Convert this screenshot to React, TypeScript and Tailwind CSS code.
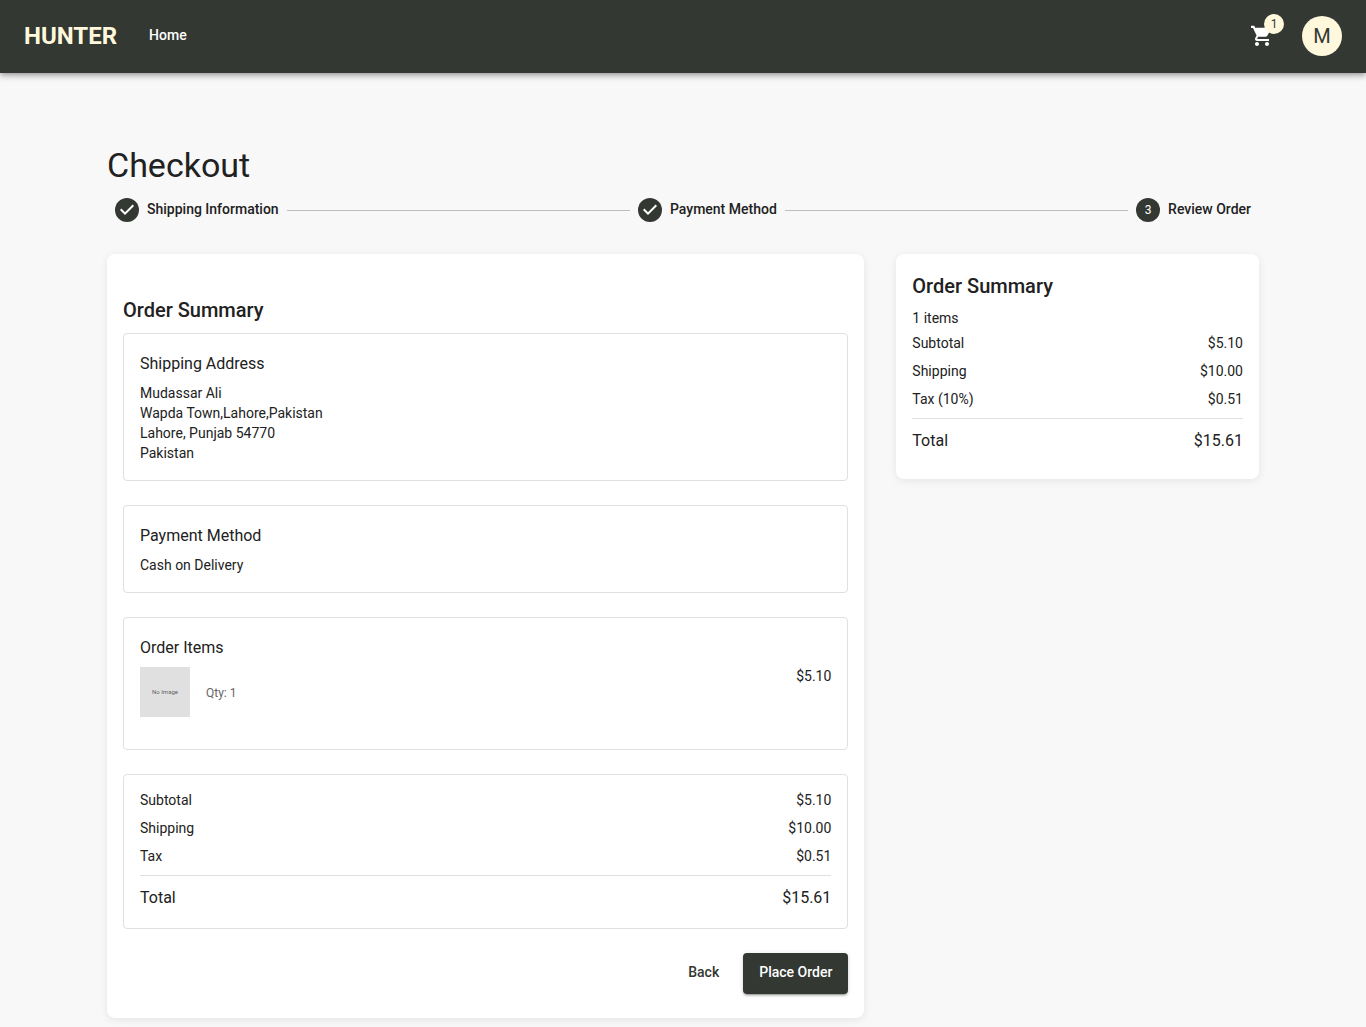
const CART_PATH =
  "M7 18c-1.1 0-1.99.9-1.99 2S5.9 22 7 22s2-.9 2-2-.9-2-2-2zM1 2v2h2l3.6 7.59-1.35 2.45c-.16.28-.25.61-.25.96 0 1.1.9 2 2 2h12v-2H7.42c-.14 0-.25-.11-.25-.25l.03-.12.9-1.83h7.45c.75 0 1.41-.41 1.75-1.03l3.58-6.49c.08-.14.12-.31.12-.48 0-.55-.45-1-1-1H5.21l-.94-2H1zm16 16c-1.1 0-1.99.9-1.99 2s.89 2 1.99 2 2-.9 2-2-.9-2-2-2z";
const CHECK_PATH = "M10 17l-5-5 1.41-1.41L10 14.17l7.59-7.59L19 8l-9 9z";

function Navbar() {
  return (
    <header className="flex h-[73px] items-center justify-between bg-[#333832] px-6 pb-0.5 shadow-[0_2px_4px_-1px_rgba(0,0,0,0.2),0_4px_5px_0_rgba(0,0,0,0.14),0_1px_10px_0_rgba(0,0,0,0.12)]">
      <div className="flex items-center">
        <span className="text-2xl font-bold leading-8 text-[#fff8dc]">HUNTER</span>
        <a className="mb-0.5 ml-8 text-sm font-medium text-white">Home</a>
      </div>
      <div className="flex items-center">
        <div className="relative mr-[28px] size-6">
          <svg viewBox="0 0 24 24" className="size-6 fill-white" aria-hidden="true">
            <path d={CART_PATH} />
          </svg>
          <span className="absolute left-[14px] top-[-10px] flex size-5 items-center justify-center rounded-full bg-[#fff8dc] text-xs text-[#333832]">
            1
          </span>
        </div>
        <div className="flex size-10 items-center justify-center rounded-full bg-[#fff8dc] text-xl text-[#333832]">
          M
        </div>
      </div>
    </header>
  );
}

function StepCircle({ number }: { number?: number }) {
  if (number) {
    return (
      <span className="flex size-6 shrink-0 items-center justify-center rounded-full bg-[#333832] text-xs text-white">
        {number}
      </span>
    );
  }
  return (
    <svg viewBox="0 0 24 24" className="size-6 shrink-0" aria-hidden="true">
      <circle cx="12" cy="12" r="12" fill="#333832" />
      <path d={CHECK_PATH} fill="#ffffff" />
    </svg>
  );
}

function Step({ label, number }: { label: string; number?: number }) {
  return (
    <div className="flex items-center px-2">
      <StepCircle number={number} />
      <span className="-mt-0.5 ml-2 text-sm font-medium leading-5 text-[#212121]">{label}</span>
    </div>
  );
}

function Stepper() {
  return (
    <div className="mb-[31.8px] flex items-center">
      <Step label="Shipping Information" />
      <div className="h-px flex-1 bg-[#bdbdbd]" />
      <Step label="Payment Method" />
      <div className="h-px flex-1 bg-[#bdbdbd]" />
      <Step label="Review Order" number={3} />
    </div>
  );
}

function Row({ label, value }: { label: string; value: string }) {
  return (
    <div className="mb-2 flex justify-between text-sm leading-[20.02px] text-[#212121]">
      <span>{label}</span>
      <span>{value}</span>
    </div>
  );
}

function TotalRow() {
  return (
    <div className="flex justify-between text-base leading-7 text-[#212121]">
      <span>Total</span>
      <span>$15.61</span>
    </div>
  );
}

function Box({ title, children }: { title?: string; children: React.ReactNode }) {
  return (
    <section className="mb-6 rounded border border-[#e0e0e0] p-4">
      {title ? <h3 className="mb-[5.6px] text-base leading-7 text-[#212121]">{title}</h3> : null}
      {children}
    </section>
  );
}

function OrderReview() {
  return (
    <main className="flex-1 rounded-lg bg-white px-4 pb-[24.3px] pt-10 shadow-[0_2px_8px_rgba(0,0,0,0.08)]">
      <h2 className="mb-[7px] text-xl font-medium leading-8 text-[#212121]">Order Summary</h2>
      <Box title="Shipping Address">
        <div className="mb-[0.1px] text-sm leading-5 text-[#212121]">
          <p>Mudassar Ali</p>
          <p>Wapda Town,Lahore,Pakistan</p>
          <p>Lahore, Punjab 54770</p>
          <p>Pakistan</p>
        </div>
      </Box>
      <Box title="Payment Method">
        <p className="mb-[0.4px] text-sm leading-[20.02px] text-[#212121]">Cash on Delivery</p>
      </Box>
      <Box title="Order Items">
        <div className="mb-4 flex items-start justify-between">
          <div className="flex items-center">
            <div className="flex size-[50px] items-center justify-center bg-[#e0e0e0] text-[6px] text-[#666666]">
              <span className="-mt-0.5">No Image</span>
            </div>
            <span className="ml-4 mt-0.5 text-xs text-[#666666]">Qty: 1</span>
          </div>
          <span className="-mt-px text-sm leading-[20.02px] text-[#212121]">$5.10</span>
        </div>
      </Box>
      <Box>
        <div className="-mt-[0.8px]">
          <Row label="Subtotal" value="$5.10" />
          <Row label="Shipping" value="$10.00" />
          <Row label="Tax" value="$0.51" />
        </div>
        <div className="mb-2 mt-[8.4px] h-px bg-[#e0e0e0]" />
        <TotalRow />
      </Box>
      <div className="flex justify-end gap-2">
        <button className="rounded px-4 pb-[8.8px] pt-[7.5px] text-sm font-medium leading-[24.5px] text-[#333832]">Back</button>
        <button className="rounded bg-[#333832] px-4 pb-[8.8px] pt-[7.5px] text-sm font-medium leading-[24.5px] text-white shadow-[0_3px_1px_-2px_rgba(0,0,0,0.2),0_2px_2px_0_rgba(0,0,0,0.14),0_1px_5px_0_rgba(0,0,0,0.12)]">
          Place Order
        </button>
      </div>
    </main>
  );
}

function SummaryCard() {
  return (
    <aside className="w-[362.67px] rounded-lg bg-white px-4 pb-6 pt-4 shadow-[0_2px_8px_rgba(0,0,0,0.08)]">
      <h2 className="mb-[6.5px] text-xl font-medium leading-8 text-[#212121]">Order Summary</h2>
      <p className="mb-[5px] text-sm leading-[20.02px] text-[#212121]">1 items</p>
      <Row label="Subtotal" value="$5.10" />
      <Row label="Shipping" value="$10.00" />
      <Row label="Tax (10%)" value="$0.51" />
      <div className="mb-2 mt-[8.1px] h-px bg-[#e0e0e0]" />
      <TotalRow />
    </aside>
  );
}

export default function App() {
  return (
    <div className="min-h-[1027px] bg-[#f8f8f8] font-['Roboto',sans-serif]">
      <Navbar />
      <div className="mx-auto w-[1152px] pb-[8px] pt-[71.6px]">
        <h1 className="mb-[11.5px] text-[34px] leading-[41.99px] text-[#212121]">Checkout</h1>
        <Stepper />
        <div className="flex items-start gap-8">
          <OrderReview />
          <SummaryCard />
        </div>
      </div>
    </div>
  );
}
